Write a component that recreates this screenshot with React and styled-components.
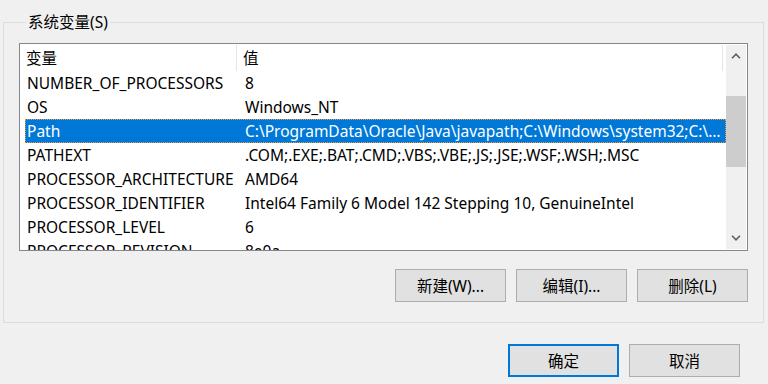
import React from 'react';
import styled, {createGlobalStyle} from 'styled-components';


/*==================== DATA ====================*/
const variables = [
  {name: 'NUMBER_OF_PROCESSORS', value: '8'},
  {name: 'OS', value: 'Windows_NT'},
  {name: 'Path', value: 'C:\\ProgramData\\Oracle\\Java\\javapath;C:\\Windows\\system32;C:\\Windows;C:\\Windows\\System32\\Wbem', selected: true},
  {name: 'PATHEXT', value: '.COM;.EXE;.BAT;.CMD;.VBS;.VBE;.JS;.JSE;.WSF;.WSH;.MSC'},
  {name: 'PROCESSOR_ARCHITECTURE', value: 'AMD64'},
  {name: 'PROCESSOR_IDENTIFIER', value: 'Intel64 Family 6 Model 142 Stepping 10, GenuineIntel'},
  {name: 'PROCESSOR_LEVEL', value: '6'},
  {name: 'PROCESSOR_REVISION', value: '8e0a'},
];


/*==================== ICONS ====================*/
const Chevron = ({up}) => (
  <svg width="10" height="6" viewBox="0 0 10 6">
    <path d={up ? 'M1 5.2 L5 1.2 L9 5.2' : 'M1 0.8 L5 4.8 L9 0.8'} fill="none" stroke="#606060" strokeWidth="1.6" />
  </svg>
);


function App() {
  return (
    <Page>
      <GlobalStyle />
      <GroupBox>
        <GroupLabel>系统变量(S)</GroupLabel>
        <ListView>
          <ListContent>
            <Header>
              <HeaderCell $width={217}>变量</HeaderCell>
              <HeaderCell $width={486}>值</HeaderCell>
            </Header>
            {variables.map(v => (
              <Row key={v.name} $selected={v.selected}>
                <NameCell>{v.name}</NameCell>
                <ValueCell>{v.value}</ValueCell>
              </Row>
            ))}
          </ListContent>
          <ScrollBar>
            <ArrowButton><Chevron up /></ArrowButton>
            <Thumb $top={29} $height={71} />
            <ArrowButton $bottom><Chevron /></ArrowButton>
          </ScrollBar>
        </ListView>
        <ButtonRow>
          <Button>新建(W)...</Button>
          <Button>编辑(I)...</Button>
          <Button>删除(L)</Button>
        </ButtonRow>
      </GroupBox>
      <Footer>
        <Button $default>确定</Button>
        <Button>取消</Button>
      </Footer>
    </Page>
  );
}


/*==================== EXPORTS ====================*/
export default App;


const GlobalStyle = createGlobalStyle`
  html, body {
    margin: 0;
    background: #f0f0f0;
  }
  body {
    font-family: "Noto Sans", "Noto Sans CJK SC", sans-serif;
    font-size: 15.5px;
    color: #000;
  }
`;

const Page = styled.div`
  width: 768px;
  height: 384px;
  box-sizing: border-box;
  padding: 12px 4px 0 3px;
  display: flex;
  flex-direction: column;
  overflow: hidden;
`;

const GroupBox = styled.fieldset`
  margin: 0;
  padding: 11px 15px 20px 15px;
  border: 1px solid #dcdcdc;
  min-width: 0;
`;

const GroupLabel = styled.legend`
  margin-left: 7px;
  padding: 0 2px 0 2px;
  line-height: 20px;
  height: 20px;
`;

const ListView = styled.div`
  width: 729px;
  height: 208px;
  box-sizing: border-box;
  border: 1px solid #828790;
  background: #fff;
  display: flex;
`;

const ListContent = styled.div`
  flex: 1;
  min-width: 0;
  overflow: hidden;
`;

const Header = styled.div`
  display: flex;
  height: 27px;
`;

const HeaderCell = styled.div`
  width: ${p => p.$width}px;
  flex: none;
  box-sizing: border-box;
  padding-left: 6px;
  border-right: 1px solid #e5e5e5;
  line-height: 26px;
  margin-top: 1px;
`;

const Row = styled.div`
  display: grid;
  grid-template-columns: 219px 1fr;
  height: 24px;
  margin-left: 5px;
  box-sizing: border-box;
  line-height: 22px;
  border: 1px dotted ${p => p.$selected ? '#e89a3c' : 'transparent'};
  background: ${p => p.$selected ? '#0078d7' : 'transparent'};
  color: ${p => p.$selected ? '#fff' : '#000'};
`;

const NameCell = styled.div`
  padding-left: 1px;
  white-space: nowrap;
  overflow: hidden;
`;

const ValueCell = styled.div`
  padding-right: 1px;
  white-space: nowrap;
  overflow: hidden;
  text-overflow: ellipsis;
`;

const ScrollBar = styled.div`
  width: 20px;
  margin: 1px 1px 1px 0;
  background: #f0f0f0;
  display: flex;
  flex-direction: column;
`;

const ArrowButton = styled.div`
  height: 22px;
  flex: none;
  display: flex;
  align-items: center;
  justify-content: center;
  margin-top: ${p => p.$bottom ? 'auto' : '0'};
`;

const Thumb = styled.div`
  margin-top: ${p => p.$top}px;
  height: ${p => p.$height}px;
  background: #cdcdcd;
`;

const ButtonRow = styled.div`
  display: flex;
  justify-content: flex-end;
  gap: 10px;
  margin-top: 18px;
  padding-right: 0;
`;

const Button = styled.div`
  width: 111px;
  height: 33px;
  box-sizing: border-box;
  display: flex;
  align-items: center;
  justify-content: center;
  background: #e1e1e1;
  border: ${p => p.$default ? '2px solid #0078d7' : '1px solid #adadad'};
`;

const Footer = styled.div`
  display: flex;
  justify-content: flex-end;
  gap: 10px;
  margin-top: 21px;
  padding-right: 24px;
`;
